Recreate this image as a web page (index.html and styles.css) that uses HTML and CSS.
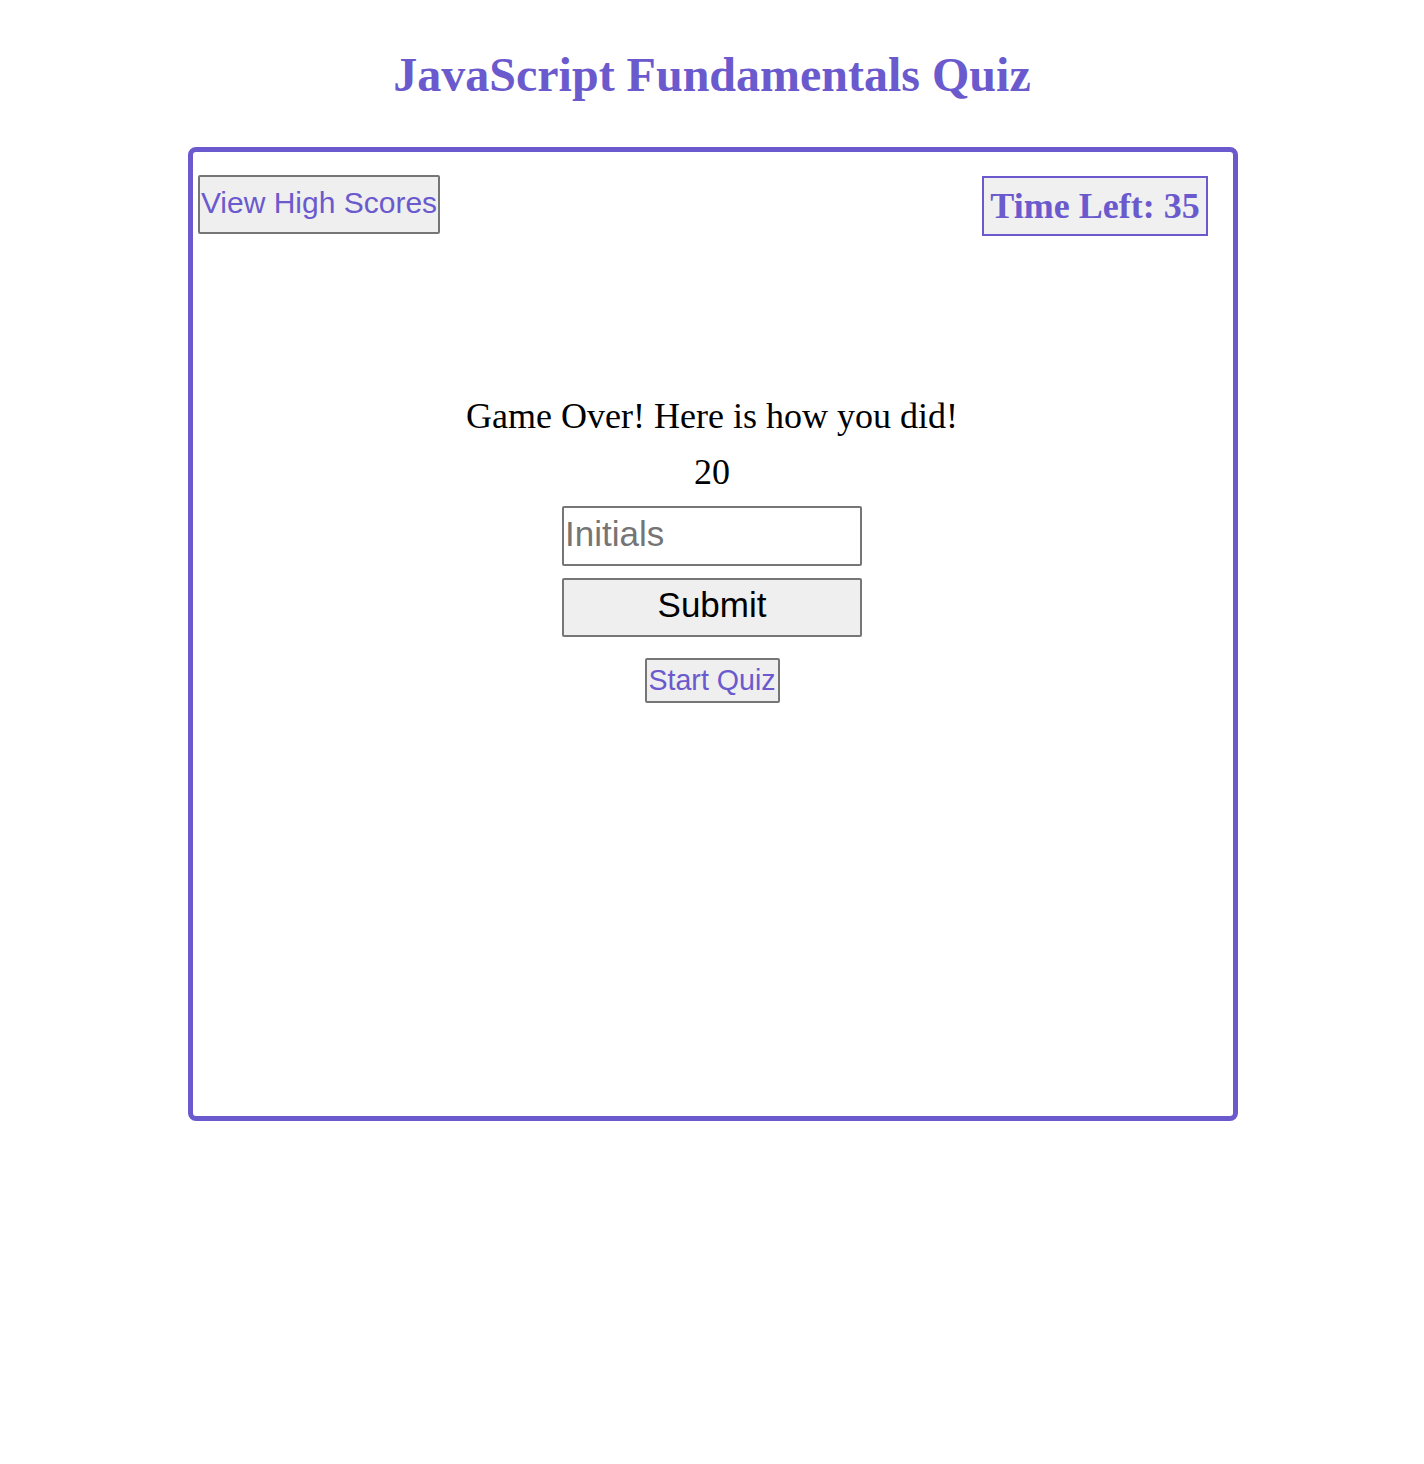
FILE: index.html
```html
<!DOCTYPE html>
<html lang="en">
<head>
<meta charset="utf-8">
<title>JavaScript Fundamentals Quiz</title>
<link rel="stylesheet" href="styles.css">
</head>
<body>
<header class="page-header">
  <h1 class="title">JavaScript Fundamentals Quiz</h1>
</header>
<main class="quiz-box">
  <div class="top-row">
    <button class="btn btn-scores" type="button">View High Scores</button>
    <div class="timer">Time Left: 35</div>
  </div>
  <section class="result">
    <p class="result-text">Game Over! Here is how you did!</p>
    <p class="result-score">20</p>
    <input class="initials" type="text" placeholder="Initials">
    <button class="btn btn-submit" type="button">Submit</button>
    <button class="btn btn-start" type="button">Start Quiz</button>
  </section>
</main>
</body>
</html>
```

FILE: styles.css
```css
html, body {
  margin: 0;
  padding: 0;
  background: #ffffff;
}

body {
  font-family: "Liberation Serif", "Times New Roman", serif;
  color: #000;
}

.page-header {
  padding-top: 47px;
  height: 147px;
  box-sizing: border-box;
}

.title {
  margin: 0;
  text-align: center;
  font-size: 48px;
  font-weight: bold;
  line-height: 55px;
  color: #6a5acd;
}

.quiz-box {
  box-sizing: border-box;
  width: 1050px;
  height: 974px;
  margin-left: 188px;
  border: 5px solid #6a5acd;
  border-radius: 8px;
  padding: 23px 25px 0 5px;
}

.top-row {
  display: flex;
  justify-content: space-between;
  align-items: flex-start;
}

.btn {
  font-family: "Liberation Sans", Arial, Helvetica, sans-serif;
  background: #efefef;
  border: 2px solid #767676;
  border-radius: 2px;
  box-sizing: border-box;
  padding: 0;
  margin: 0;
}

.btn-scores {
  width: 242px;
  height: 59px;
  padding-bottom: 4px;
  font-size: 30px;
  color: #6a5acd;
}

.timer {
  box-sizing: border-box;
  margin-top: 1px;
  height: 60px;
  width: 226px;
  border: 2px solid #6a5acd;
  background: #f0f0f0;
  color: #6a5acd;
  font-size: 36px;
  font-weight: bold;
  line-height: 56px;
  text-align: center;
}

.result {
  display: flex;
  flex-direction: column;
  align-items: center;
  margin-top: 161px;
  padding-left: 18px;
}

.result-text,
.result-score {
  margin: 0;
  font-size: 36px;
  line-height: 39px;
}

.result-score {
  margin-top: 17px;
}

.initials {
  box-sizing: border-box;
  margin-top: 14px;
  width: 300px;
  height: 60px;
  padding: 0 0 4px 1px;
  border: 2px solid #767676;
  border-radius: 2px;
  font-family: "Liberation Sans", Arial, Helvetica, sans-serif;
  font-size: 35px;
}

.initials::placeholder {
  color: #757575;
}

.btn-submit {
  margin-top: 12px;
  width: 300px;
  height: 59px;
  padding-bottom: 5px;
  font-size: 35px;
  color: #000;
}

.btn-start {
  margin-top: 21px;
  width: 135px;
  height: 45px;
  font-size: 28.6px;
  color: #6a5acd;
}
```
